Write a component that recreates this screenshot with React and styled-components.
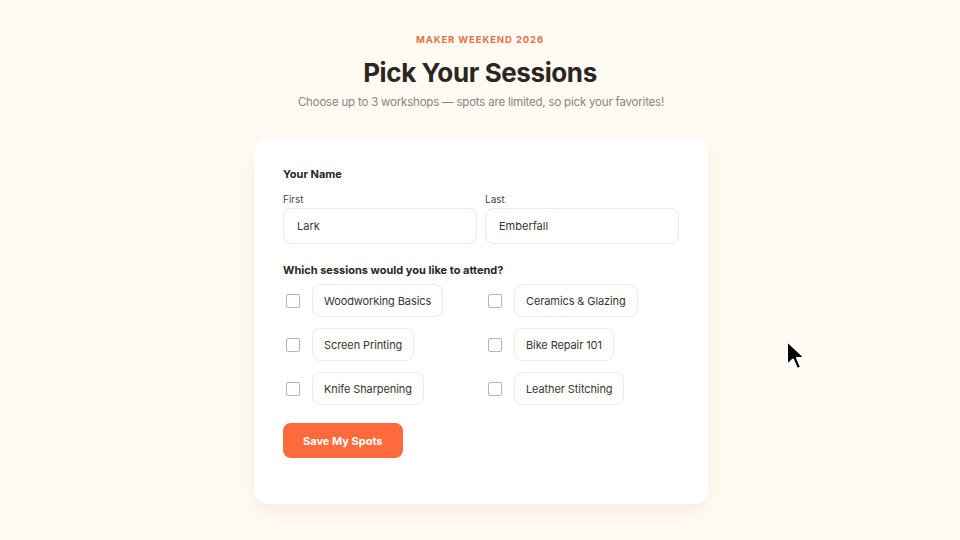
import { createGlobalStyle, styled } from "styled-components";

const GlobalStyle = createGlobalStyle`
    html, body {
        margin: 0;
        padding: 0;
        background: #fffaf2;
    }
    body {
        font-family: "Inter", "Noto Sans", sans-serif;
        color: #2a2622;
    }
`;

const Page = styled.div`
    position: relative;
    width: 960px;
    height: 540px;
    overflow: hidden;
    display: flex;
    flex-direction: column;
    align-items: center;
    padding-top: 34px;
    box-sizing: border-box;
`;

const Eyebrow = styled.div`
    font-size: 9.5px;
    font-weight: 700;
    letter-spacing: 0.9px;
    color: #e8704a;
    text-transform: uppercase;
`;

const Title = styled.h1`
    margin: 12px 0 0;
    font-size: 26px;
    font-weight: 700;
    letter-spacing: -0.4px;
    color: #2a2622;
`;

const Subtitle = styled.p`
    margin: 7px 0 0 2px;
    font-size: 11.5px;
    letter-spacing: -0.2px;
    color: #8a8580;
`;

const Card = styled.form`
    margin: 30px 0 0 2px;
    width: 454px;
    box-sizing: border-box;
    background: #fff;
    border-radius: 14px;
    padding: 28px 29px 46px;
    box-shadow: 0 8px 18px rgba(214, 190, 155, 0.18);
`;

const SectionLabel = styled.div`
    font-size: 11px;
    font-weight: 700;
    color: #2a2622;
    margin-bottom: ${(p) => p.$gap || 10}px;
`;

const NameRow = styled.div`
    display: grid;
    grid-template-columns: minmax(0, 1fr) minmax(0, 1fr);
    gap: 8px;
    margin-bottom: 19px;
`;

const Field = styled.label`
    display: flex;
    flex-direction: column;
    gap: 3px;
    min-width: 0;
`;

const FieldLabel = styled.span`
    font-size: 10px;
    color: #4a4540;
`;

const Input = styled.input`
    width: 100%;
    min-width: 0;
    height: 36px;
    box-sizing: border-box;
    border: 1px solid #f0ebe0;
    border-radius: 8px;
    padding: 0 13px;
    font-family: inherit;
    font-size: 11px;
    color: #3a3530;
    background: #fff;
    outline: none;
`;

const SessionGrid = styled.div`
    display: grid;
    grid-template-columns: minmax(0, 1fr) minmax(0, 1fr);
    column-gap: 8px;
    row-gap: 11px;
`;

const Option = styled.label`
    display: flex;
    align-items: center;
    gap: 12px;
`;

const Box = styled.span`
    width: 14px;
    height: 14px;
    margin-left: 3px;
    box-sizing: border-box;
    border: 1px solid #b8b4ae;
    border-radius: 2px;
    background: #fff;
    flex-shrink: 0;
`;

const Chip = styled.span`
    height: 33px;
    box-sizing: border-box;
    display: inline-flex;
    align-items: center;
    padding: 0 11px;
    border: 1px solid #f0ebe0;
    border-radius: 8px;
    font-size: 11px;
    letter-spacing: -0.1px;
    color: #3a3530;
`;

const SaveButton = styled.button`
    margin-top: 18px;
    height: 35px;
    padding: 0 20px;
    border: none;
    border-radius: 8px;
    background: #ff6a3d;
    color: #fff;
    font-family: inherit;
    font-size: 11px;
    font-weight: 700;
`;

const Cursor = styled.svg`
    position: absolute;
    left: 784px;
    top: 339px;
`;

const sessions = [
    "Woodworking Basics",
    "Ceramics & Glazing",
    "Screen Printing",
    "Bike Repair 101",
    "Knife Sharpening",
    "Leather Stitching",
];

export default function App() {
    return (
        <Page>
            <GlobalStyle />
            <Eyebrow>Maker Weekend 2026</Eyebrow>
            <Title>Pick Your Sessions</Title>
            <Subtitle>Choose up to 3 workshops — spots are limited, so pick your favorites!</Subtitle>
            <Card onSubmit={(e) => e.preventDefault()}>
                <SectionLabel $gap={12}>Your Name</SectionLabel>
                <NameRow>
                    <Field>
                        <FieldLabel>First</FieldLabel>
                        <Input defaultValue="Lark" />
                    </Field>
                    <Field>
                        <FieldLabel>Last</FieldLabel>
                        <Input defaultValue="Emberfall" />
                    </Field>
                </NameRow>
                <SectionLabel $gap={7}>Which sessions would you like to attend?</SectionLabel>
                <SessionGrid>
                    {sessions.map((s) => (
                        <Option key={s}>
                            <Box />
                            <Chip>{s}</Chip>
                        </Option>
                    ))}
                </SessionGrid>
                <SaveButton type="submit">Save My Spots</SaveButton>
            </Card>
            {/* mouse pointer over the page */}
            <Cursor width="24" height="36" viewBox="0 0 24 36">
                <path d="M3 2 L3 26 L9 20.5 L13 30 L17 28.3 L13 19 L21 19 Z" fill="#000" stroke="#fff" strokeWidth="2" strokeLinejoin="round" />
            </Cursor>
        </Page>
    );
}
